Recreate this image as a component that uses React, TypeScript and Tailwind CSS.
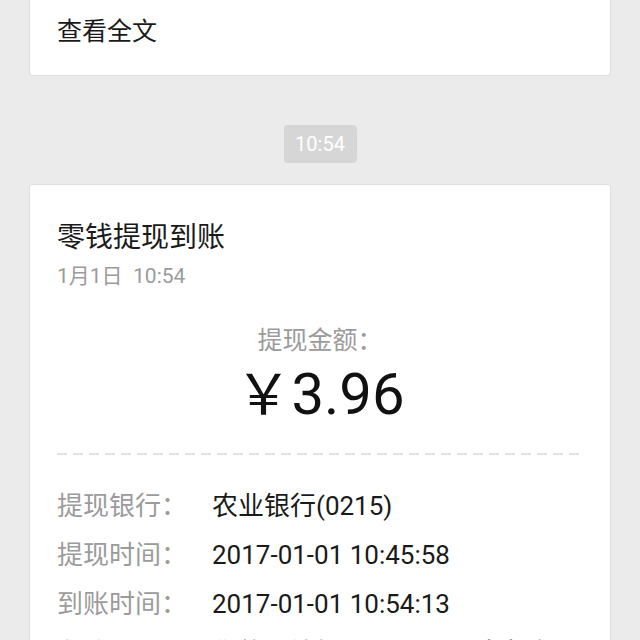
import React from "react";

const font = { fontFamily: 'Roboto, "Noto Sans CJK SC", sans-serif' };

function Row({ label, value }: { label: string; value: string }) {
  return (
    <div className="flex h-[49px] items-center">
      <div className="w-[155px] shrink-0 text-[26px] leading-[34px] text-[#9b9b9b]">{label}</div>
      <div className="text-[26px] leading-[34px] text-[#1a1a1a] whitespace-nowrap">{value}</div>
    </div>
  );
}

export default function App() {
  return (
    <div className="w-[640px] h-[640px] overflow-hidden bg-[#ebebeb]" style={font}>
      <div className="px-[29px]">
        <div className="h-[76px] bg-white border-x border-b border-[#dedede] rounded-b-[3px] px-[27px] pt-[15px]">
          <div className="text-[25px] leading-[34px] text-[#1a1a1a]">查看全文</div>
        </div>
        <div className="flex justify-center pt-[49px] pb-[21px]">
          <div className="w-[73px] h-[38px] rounded-[4px] bg-[#d6d6d6] flex items-center justify-center text-[20px] text-white">
            10:54
          </div>
        </div>
        <div className="bg-white border border-[#dedede] rounded-[3px] px-[27px] pt-[36px] pb-[20px]">
          <div className="text-[28px] leading-[34px] text-[#1a1a1a]">零钱提现到账</div>
          <div className="mt-[8px] text-[21px] leading-[26px] text-[#9b9b9b] whitespace-pre">1月1日  10:54</div>
          <div className="mt-[37px] text-center text-[25px] leading-[30px] text-[#9b9b9b]">提现金额：</div>
          <div className="mt-[3px] flex justify-center items-baseline text-[#111] leading-[70px]">
            <span className="text-[56px]">￥</span>
            <span className="text-[58px]">3.96</span>
          </div>
          <div className="mt-[23px] mr-[4px] h-[2px] bg-[repeating-linear-gradient(to_right,#e2e2e2_0px,#e2e2e2_10px,transparent_10px,transparent_16px)]" />
          <div className="mt-[26px]">
            <Row label="提现银行：" value="农业银行(0215)" />
            <Row label="提现时间：" value="2017-01-01 10:45:58" />
            <Row label="到账时间：" value="2017-01-01 10:54:13" />
            <Row label="备注：" value="你的零钱提现已到账，请查收" />
          </div>
        </div>
      </div>
    </div>
  );
}
